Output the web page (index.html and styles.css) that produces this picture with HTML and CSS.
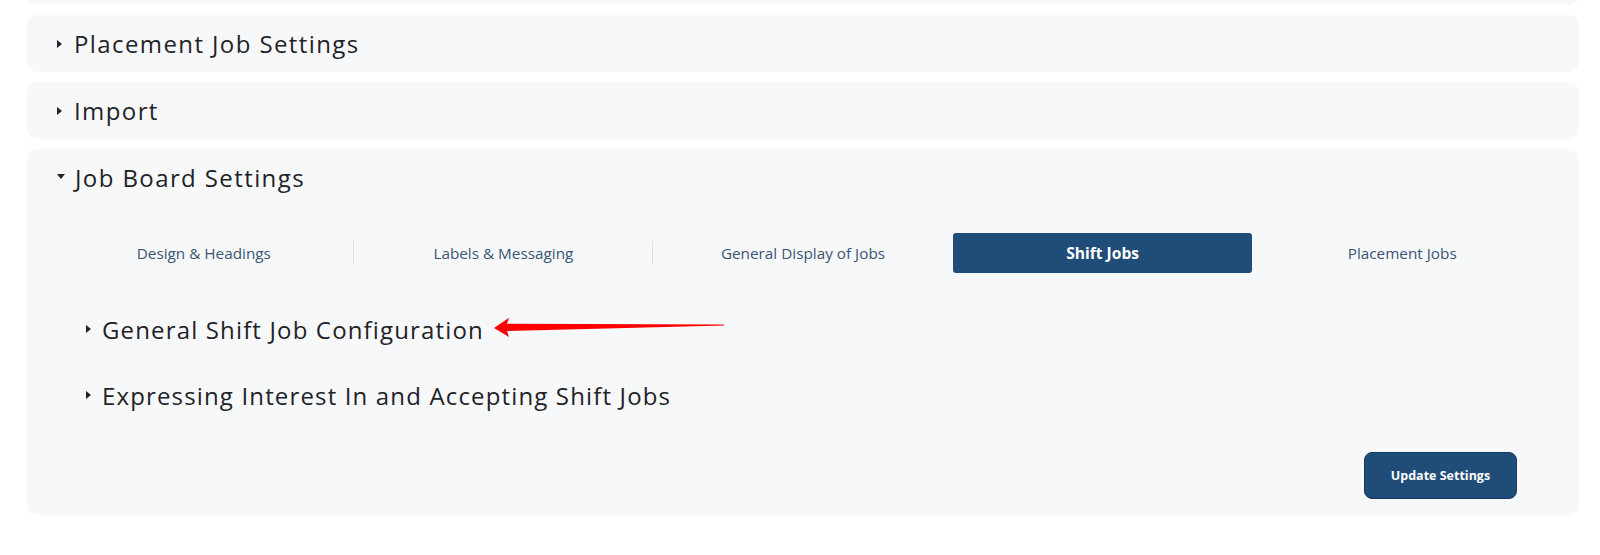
FILE: index.html
```html
<!DOCTYPE html>
<html lang="en">
<head>
<meta charset="utf-8">
<title>Settings</title>
<link rel="stylesheet" href="styles.css">
</head>
<body>
<div class="page">
  <section class="card card-stub"></section>
  <section class="card">
    <div class="card-head"><span class="caret-right"></span><span class="card-title">Placement Job Settings</span></div>
  </section>
  <section class="card">
    <div class="card-head"><span class="caret-right"></span><span class="card-title">Import</span></div>
  </section>
  <section class="card card-open">
    <div class="card-head"><span class="caret-down"></span><span class="card-title title-open">Job Board Settings</span></div>
    <div class="card-body">
      <nav class="tabs">
        <a class="tab tab-div">Design &amp; Headings</a>
        <a class="tab tab-div">Labels &amp; Messaging</a>
        <a class="tab">General Display of Jobs</a>
        <a class="tab tab-active">Shift Jobs</a>
        <a class="tab">Placement Jobs</a>
      </nav>
      <div class="items">
        <div class="item">
          <span class="caret-right"></span><span class="item-title">General Shift Job Configuration</span>
          <svg class="arrow" width="240" height="30" viewBox="0 0 240 30"><polygon points="5,16 20,5.7 18,11.7 235,12.5 235,13.5 18,19 20,25" fill="#ff0000"/></svg>
        </div>
        <div class="item">
          <span class="caret-right"></span><span class="item-title">Expressing Interest In and Accepting Shift Jobs</span>
        </div>
      </div>
      <div class="actions">
        <button class="btn-update">Update Settings</button>
      </div>
    </div>
  </section>
</div>
</body>
</html>
```

FILE: styles.css
```css
* { box-sizing: border-box; }
html, body { margin: 0; padding: 0; background: #ffffff; }
body { font-family: "Open Sans", "Lato", sans-serif; color: #1f2328; overflow: hidden; }

.page {
  padding: 0 21px 0 27px;
  display: flex;
  flex-direction: column;
  gap: 10px;
}

.card {
  background: #f7f8fa;
  border-radius: 10px;
  width: 1552px;
}
.card-stub { height: 57px; margin-top: -52px; }

.card-head {
  height: 57px;
  display: flex;
  align-items: center;
  padding-left: 30px;
}
.card-title {
  font-size: 24px;
  font-weight: 400;
  margin-left: 12px;
  letter-spacing: 1.4px;
}
.title-open { margin-left: 10px; }

.caret-right {
  width: 0; height: 0;
  border-top: 4px solid transparent;
  border-bottom: 4px solid transparent;
  border-left: 5px solid #1f2328;
}
.caret-down {
  width: 0; height: 0;
  border-left: 4px solid transparent;
  border-right: 4px solid transparent;
  border-top: 5px solid #1f2328;
  margin-top: -2px;
}

.card-body { padding: 27px 27px 16px 27px; }

.tabs {
  display: grid;
  grid-template-columns: repeat(5, 1fr);
  height: 40px;
  align-items: center;
}
.tab {
  height: 40px;
  display: flex;
  align-items: center;
  justify-content: center;
  font-size: 15.3px;
  color: #3a5573;
  position: relative;
}
.tab-div::after {
  content: "";
  position: absolute;
  right: 0; top: 8px;
  height: 23px;
  border-right: 1px solid #dfe2e6;
}
.tab-active {
  background: #1f4d78;
  color: #ffffff;
  font-weight: 700;
  border-radius: 3px;
  font-size: 15.6px;
}

.items {
  padding-left: 32px;
  display: flex;
  flex-direction: column;
  gap: 30px;
  margin-top: 38px;
}
.item {
  height: 36px;
  display: flex;
  align-items: center;
  position: relative;
}
.item-title {
  font-size: 24px;
  margin-left: 11px;
  letter-spacing: 1.15px;
}
.arrow { position: absolute; left: 403px; top: 1px; }

.actions {
  display: flex;
  justify-content: flex-end;
  padding-right: 35px;
  margin-top: 39px;
}
.btn-update {
  width: 153px;
  height: 47px;
  background: #1f4d78;
  color: #ffffff;
  border: 1px solid #163a5c;
  border-radius: 8px;
  font-family: "Open Sans", sans-serif;
  font-weight: 700;
  font-size: 12.5px;
}
```
